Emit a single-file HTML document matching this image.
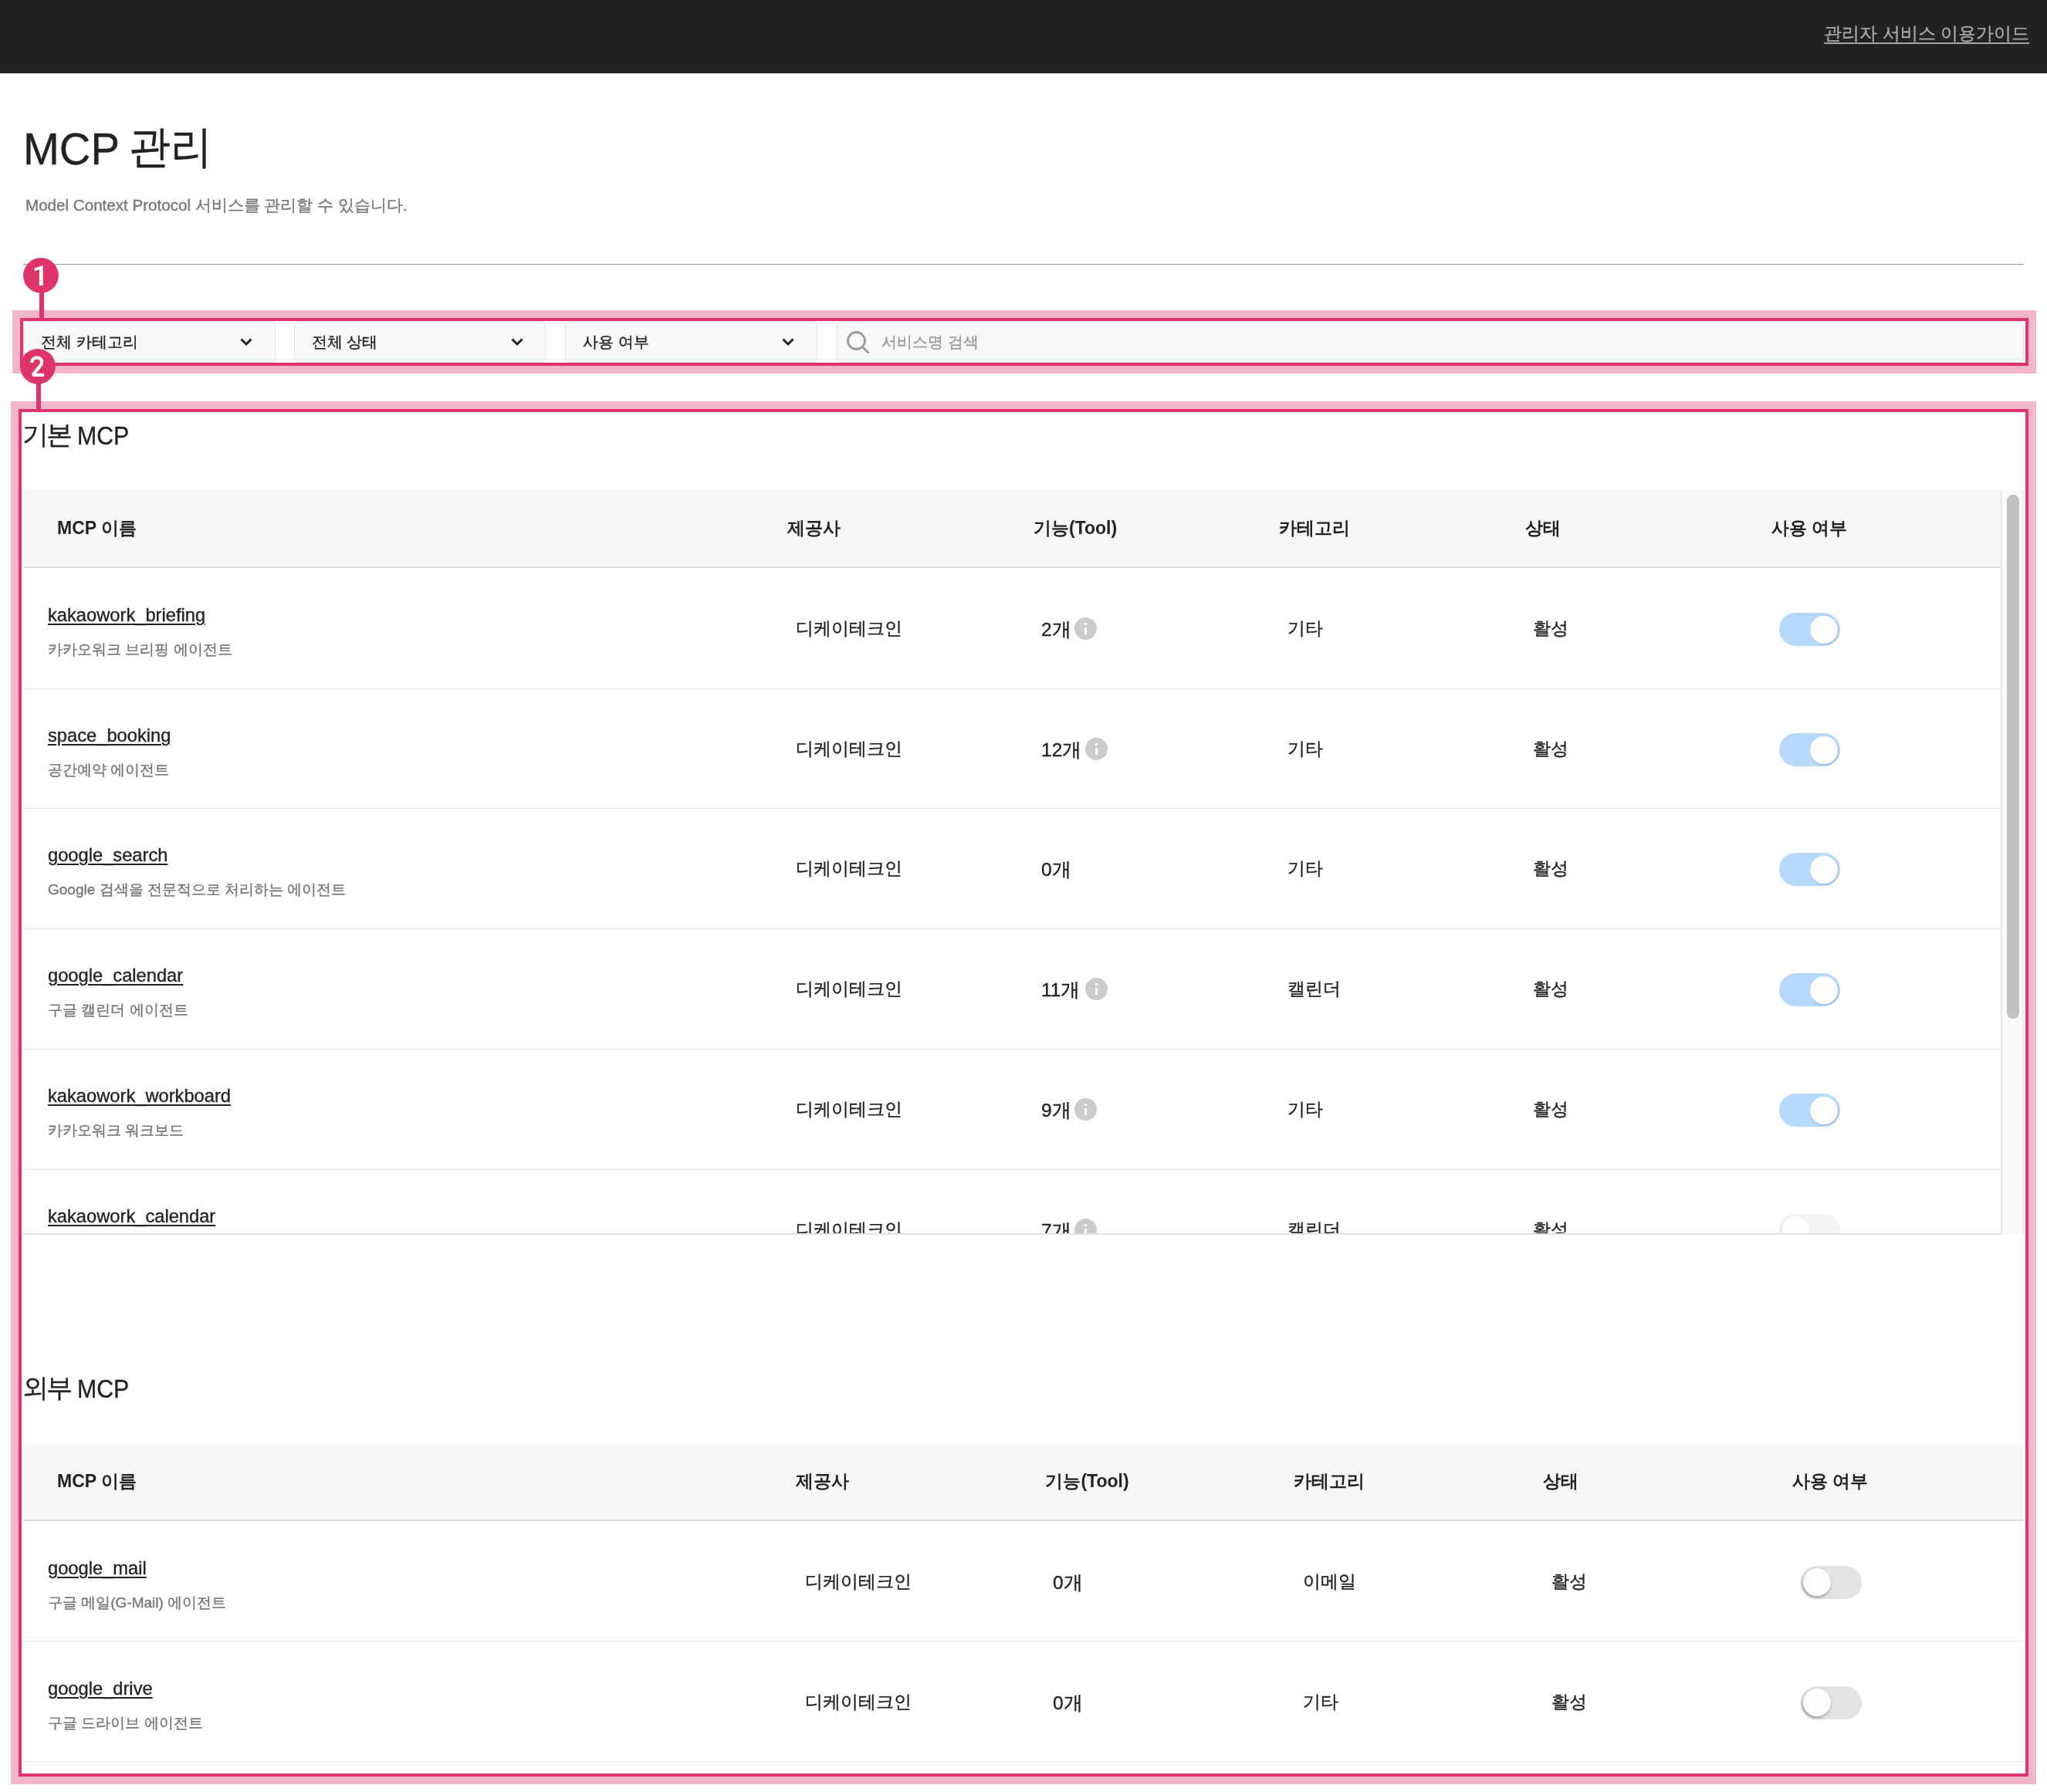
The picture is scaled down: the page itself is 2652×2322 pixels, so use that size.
<!DOCTYPE html>
<html><head><meta charset="utf-8"><style>
*{margin:0;padding:0;box-sizing:border-box}
html,body{width:2652px;height:2322px;overflow:hidden;background:#fff}
body{position:relative;will-change:transform;font-family:"Liberation Sans",sans-serif;color:#222}
.a{position:absolute}
.t{position:absolute;white-space:nowrap;line-height:1;-webkit-text-stroke:0.35px currentColor}
.tht{-webkit-text-stroke:0}
.hdr{left:0;top:0;width:2652px;height:95px;background:#222;border-bottom:1px solid #191919}
.link{color:#a9a9a9;font-size:22.8px;text-decoration:underline;text-underline-offset:4px;text-decoration-thickness:2px}
.title{font-size:58px;color:#222}
.sub{font-size:20.6px;color:#767676}
.sep{left:30px;top:342px;width:2592px;height:1px;background:#999}
.sel{background:#f7f8fa;border:1px solid #dfe3ea;border-radius:6px;top:416px;height:54px}
.selt{font-size:20px;color:#222}
.ph{font-size:20px;color:#999}
.h2{font-size:33px;color:#222}
.h2 span{font-size:34px;letter-spacing:-3px;position:relative;top:-1px}
.h2 b{font-weight:normal;font-size:34px;display:inline-block;transform:scaleX(.89);transform-origin:0 50%}
.th{background:#f7f7f7;border-bottom:2px solid #dedede}
.tht{font-size:23px;font-weight:bold;color:#222}
.rowb{height:1px;background:#e4e4e4}
.name{font-size:23.7px;color:#222;text-decoration:underline;text-decoration-thickness:2px;text-underline-offset:3px}
.desc{font-size:19px;color:#767676}
.cell{font-size:23.2px;color:#222}
.tool{font-size:24.5px}
.info{width:29px;height:29px;border-radius:50%;background:#cbcbcb}
.info:before{content:"";position:absolute;left:13px;top:7px;width:3px;height:3px;background:#fff}
.info:after{content:"";position:absolute;left:13px;top:12.5px;width:3px;height:9px;background:#fff}
.tg{width:79px;height:43px;border-radius:22px}
.tg.on{background:#b6d8fd}
.tg.off{background:#e3e3e3}
.tg.dis{opacity:.36}
.knob{width:36px;height:36px;border-radius:50%;background:#fdfdfd;top:4px}
.tg.on .knob{left:40px;box-shadow:1px 2px 3px rgba(0,0,0,.12)}
.tg.off .knob{left:3px;top:3px;box-shadow:-1px 2px 4px rgba(0,0,0,.35)}
.hl1{border:10px solid #f2b6ca}
.hl2{border:4px solid #de3469}
.badge{width:46px;height:46px;border-radius:50%;background:#de3469;color:#fff;font-weight:bold;font-size:30px;text-align:center;line-height:46px}
.stem{width:6px;background:#de3469}
</style></head><body>
<div class="a hdr"></div>
<div class="t link" style="right:23px;top:32px">관리자 서비스 이용가이드</div>
<div class="t title" style="left:30px;top:164px;transform:scaleX(.97);transform-origin:0 0">MCP</div>
<div class="t title" style="left:166.7px;top:161px;transform:scaleX(.93);transform-origin:0 0">관리</div>
<div class="t sub" style="left:33px;top:256px">Model Context Protocol 서비스를 관리할 수 있습니다.</div>
<div class="a sep"></div>
<div class="a sel" style="left:30px;width:327px"></div>
<div class="t selt" style="left:53px;top:433px">전체 카테고리</div>
<svg class="a" style="left:311px;top:437px" width="16" height="12" viewBox="0 0 16 12"><path d="M1.5 2.5 L8 9 L14.5 2.5" fill="none" stroke="#222" stroke-width="3"/></svg>
<div class="a sel" style="left:381px;width:326px"></div>
<div class="t selt" style="left:403.6px;top:433px">전체 상태</div>
<svg class="a" style="left:662px;top:437px" width="16" height="12" viewBox="0 0 16 12"><path d="M1.5 2.5 L8 9 L14.5 2.5" fill="none" stroke="#222" stroke-width="3"/></svg>
<div class="a sel" style="left:732px;width:327px"></div>
<div class="t selt" style="left:755px;top:433px">사용 여부</div>
<svg class="a" style="left:1012.5px;top:437px" width="16" height="12" viewBox="0 0 16 12"><path d="M1.5 2.5 L8 9 L14.5 2.5" fill="none" stroke="#222" stroke-width="3"/></svg>
<div class="a sel" style="left:1084px;width:1538px"></div>
<svg class="a" style="left:1094px;top:426px" width="36" height="36" viewBox="0 0 36 36"><circle cx="15.5" cy="15.5" r="11" fill="none" stroke="#999" stroke-width="2.8"/><path d="M23.5 23.5 L30.5 30.5" stroke="#999" stroke-width="3" stroke-linecap="round"/></svg>
<div class="t ph" style="left:1142px;top:433px">서비스명 검색</div>
<div class="t h2" style="left:29px;top:547px"><span>기본</span> <b>MCP</b></div>
<div class="a" style="left:0;top:0;width:2652px;height:1598px;overflow:hidden">
<div class="a th" style="left:30px;top:635px;width:2562px;height:101px"></div>
<div class="t tht" style="left:74px;top:673px">MCP 이름</div>
<div class="t tht" style="left:1019.6px;top:673px">제공사</div>
<div class="t tht" style="left:1339px;top:673px">기능(Tool)</div>
<div class="t tht" style="left:1657px;top:673px">카테고리</div>
<div class="t tht" style="left:1976px;top:673px">상태</div>
<div class="t tht" style="left:2295px;top:673px">사용 여부</div>
<div class="t name" style="left:62px;top:786px">kakaowork_briefing</div>
<div class="t desc" style="left:62px;top:832px">카카오워크 브리핑 에이전트</div>
<div class="t cell" style="left:1031px;top:803px">디케이테크인</div>
<div class="t cell tool" style="left:1349px;top:804px">2개</div>
<div class="a info" style="left:1392px;top:800px"></div>
<div class="t cell" style="left:1668px;top:803px">기타</div>
<div class="t cell" style="left:1986px;top:803px">활성</div>
<div class="a tg on" style="left:2305px;top:794px"><div class="a knob"></div></div>
<div class="a rowb" style="left:30px;top:892px;width:2562px"></div>
<div class="t name" style="left:62px;top:942px">space_booking</div>
<div class="t desc" style="left:62px;top:988px">공간예약 에이전트</div>
<div class="t cell" style="left:1031px;top:959px">디케이테크인</div>
<div class="t cell tool" style="left:1349px;top:960px">12개</div>
<div class="a info" style="left:1406px;top:956px"></div>
<div class="t cell" style="left:1668px;top:959px">기타</div>
<div class="t cell" style="left:1986px;top:959px">활성</div>
<div class="a tg on" style="left:2305px;top:950px"><div class="a knob"></div></div>
<div class="a rowb" style="left:30px;top:1047px;width:2562px"></div>
<div class="t name" style="left:62px;top:1097px">google_search</div>
<div class="t desc" style="left:62px;top:1143px">Google 검색을 전문적으로 처리하는 에이전트</div>
<div class="t cell" style="left:1031px;top:1114px">디케이테크인</div>
<div class="t cell tool" style="left:1349px;top:1115px">0개</div>
<div class="t cell" style="left:1668px;top:1114px">기타</div>
<div class="t cell" style="left:1986px;top:1114px">활성</div>
<div class="a tg on" style="left:2305px;top:1105px"><div class="a knob"></div></div>
<div class="a rowb" style="left:30px;top:1203px;width:2562px"></div>
<div class="t name" style="left:62px;top:1253px">google_calendar</div>
<div class="t desc" style="left:62px;top:1299px">구글 캘린더 에이전트</div>
<div class="t cell" style="left:1031px;top:1270px">디케이테크인</div>
<div class="t cell tool" style="left:1349px;top:1271px">11개</div>
<div class="a info" style="left:1406px;top:1267px"></div>
<div class="t cell" style="left:1668px;top:1270px">캘린더</div>
<div class="t cell" style="left:1986px;top:1270px">활성</div>
<div class="a tg on" style="left:2305px;top:1261px"><div class="a knob"></div></div>
<div class="a rowb" style="left:30px;top:1359px;width:2562px"></div>
<div class="t name" style="left:62px;top:1409px">kakaowork_workboard</div>
<div class="t desc" style="left:62px;top:1455px">카카오워크 워크보드</div>
<div class="t cell" style="left:1031px;top:1426px">디케이테크인</div>
<div class="t cell tool" style="left:1349px;top:1427px">9개</div>
<div class="a info" style="left:1392px;top:1423px"></div>
<div class="t cell" style="left:1668px;top:1426px">기타</div>
<div class="t cell" style="left:1986px;top:1426px">활성</div>
<div class="a tg on" style="left:2305px;top:1417px"><div class="a knob"></div></div>
<div class="a rowb" style="left:30px;top:1515px;width:2562px"></div>
<div class="t name" style="left:62px;top:1565px">kakaowork_calendar</div>
<div class="t desc" style="left:62px;top:1611px">카카오워크 캘린더</div>
<div class="t cell" style="left:1031px;top:1582px">디케이테크인</div>
<div class="t cell tool" style="left:1349px;top:1583px">7개</div>
<div class="a info" style="left:1392px;top:1579px"></div>
<div class="t cell" style="left:1668px;top:1582px">캘린더</div>
<div class="t cell" style="left:1986px;top:1582px">활성</div>
<div class="a tg off dis" style="left:2305px;top:1573px"><div class="a knob"></div></div>
<div class="a rowb" style="left:30px;top:1672px;width:2562px"></div>
</div>
<div class="a" style="left:30px;top:1598px;width:2563px;height:2px;background:#e2e2e2"></div>
<div class="a" style="left:2592px;top:635px;width:30px;height:965px;background:#fafafa;border-left:2px solid #e8e8e8;border-right:2px solid #ececec"></div>
<div class="a" style="left:2600px;top:641px;width:16px;height:679px;border-radius:8px;background:#c1c1c1"></div>
<div class="t h2" style="left:29px;top:1782px"><span>외부</span> <b>MCP</b></div>
<div class="a th" style="left:30px;top:1870px;width:2592px;height:101px"></div>
<div class="t tht" style="left:74px;top:1908px">MCP 이름</div>
<div class="t tht" style="left:1031.3px;top:1908px">제공사</div>
<div class="t tht" style="left:1354.4px;top:1908px">기능(Tool)</div>
<div class="t tht" style="left:1676px;top:1908px">카테고리</div>
<div class="t tht" style="left:1998.5px;top:1908px">상태</div>
<div class="t tht" style="left:2321.7px;top:1908px">사용 여부</div>
<div class="t name" style="left:62px;top:2021px">google_mail</div>
<div class="t desc" style="left:62px;top:2067px">구글 메일(G-Mail) 에이전트</div>
<div class="t cell" style="left:1043px;top:2038px">디케이테크인</div>
<div class="t cell tool" style="left:1364px;top:2039px">0개</div>
<div class="t cell" style="left:1688px;top:2038px">이메일</div>
<div class="t cell" style="left:2009.5px;top:2038px">활성</div>
<div class="a tg off" style="left:2333px;top:2029px"><div class="a knob"></div></div>
<div class="a rowb" style="left:30px;top:2126px;width:2592px"></div>
<div class="t name" style="left:62px;top:2177px">google_drive</div>
<div class="t desc" style="left:62px;top:2223px">구글 드라이브 에이전트</div>
<div class="t cell" style="left:1043px;top:2194px">디케이테크인</div>
<div class="t cell tool" style="left:1364px;top:2195px">0개</div>
<div class="t cell" style="left:1688px;top:2194px">기타</div>
<div class="t cell" style="left:2009.5px;top:2194px">활성</div>
<div class="a tg off" style="left:2333px;top:2185px"><div class="a knob"></div></div>
<div class="a rowb" style="left:30px;top:2282px;width:2592px"></div>
<div class="a hl1" style="left:16px;top:402px;width:2622px;height:82px"><div class="a hl2" style="left:0;top:0;width:2602px;height:62px"></div></div>
<div class="a hl1" style="left:14px;top:520px;width:2624px;height:1792px"><div class="a hl2" style="left:0;top:0;width:2604px;height:1772px"></div></div>
<div class="a stem" style="left:51px;top:370px;height:42px"></div>
<svg class="a" style="left:26px;top:330px" width="54" height="54" viewBox="0 0 54 54"><circle cx="27" cy="26.9" r="22.9" fill="#de3469"/><path d="M29.7 13.9 L29.7 39.9 L24.9 39.9 L24.9 19.3 L18.7 21.2 L18.7 17.5 L29.2 13.9 Z" fill="#fff"/></svg>
<div class="a stem" style="left:47px;top:490px;height:40px"></div>
<svg class="a" style="left:22px;top:448px" width="54" height="54" viewBox="0 0 54 54"><circle cx="26.9" cy="26.8" r="22.9" fill="#de3469"/><path d="M19.2 22 C19.2 17.6 22 15.3 25.9 15.3 C29.8 15.3 32.2 17.8 32.2 20.9 C32.2 23.2 31.2 24.9 29.4 26.9 L20.6 37.9 L35.1 37.9" fill="none" stroke="#fff" stroke-width="4.2" stroke-linejoin="bevel"/></svg>
</body></html>
